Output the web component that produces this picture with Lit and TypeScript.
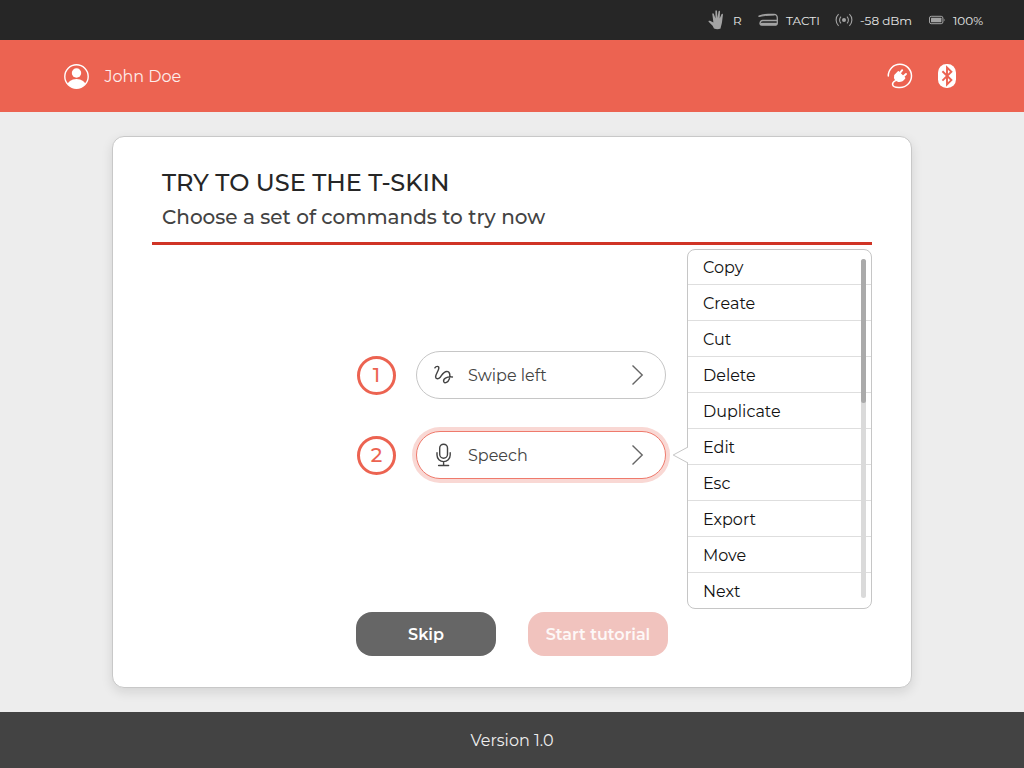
import { LitElement, html, css } from "lit";
import { customElement, state } from "lit/decorators.js";
import { classMap } from "lit/directives/class-map.js";

const COMMANDS = ["Copy", "Create", "Cut", "Delete", "Duplicate", "Edit", "Esc", "Export", "Move", "Next"];

const chevron = html`<svg width="14" height="22" viewBox="0 0 14 22" fill="none" stroke="#666" stroke-width="1.4"><path d="M1.5 1.5 11.2 11 1.5 20.5"/></svg>`;

const swipeIcon = html`<svg width="24" height="24" viewBox="0 0 24 24" fill="none" stroke="#434343" stroke-width="1.45" stroke-linecap="round" stroke-linejoin="round"><path d="M2.9 4.8C4 3 7 2.6 6.8 5.3C6.6 7.9 3.5 11.2 3.6 14C3.8 16.4 6.5 16.4 8.2 14.3C10.2 11.6 11.5 8.4 14.8 8.4C18 8.6 18.5 12.5 17.3 16C16 19.4 12.9 20.8 11.9 19C10.5 16.3 14.6 13.3 20.4 14"/></svg>`;

const micIcon = html`<svg width="24" height="24" viewBox="0 0 24 24" fill="none" stroke="#434343" stroke-width="1.4" stroke-linecap="round"><rect x="7.7" y="1.2" width="7.8" height="14" rx="3.9"/><path d="M5 9.8V12a6.6 6.6 0 0 0 13.2 0V9.8M11.6 18.6V22.4M6.6 22.5h10"/></svg>`;

@customElement("app-root")
export class AppRoot extends LitElement {
  static styles = css`
    :host { display: flex; flex-direction: column; width: 1024px; height: 768px; background: #ededed; font-family: Montserrat, Inter, "Open Sans", sans-serif; font-size: 16px; color: #434343; }
    * { box-sizing: border-box; }
    svg { display: block; flex: none; }
    .status { height: 40px; background: #262626; color: #e6e6e6; display: flex; align-items: center; justify-content: flex-end; padding-right: 40px; font-size: 12px; font-weight: 400; }
    .status span { white-space: nowrap; }
    .r { width: 8px; margin: 0 17px 0 9px; }
    .tacti { width: 34px; margin: 0 15px 0 7px; }
    .dbm { width: 52px; margin: 0 17px 0 7px; }
    .pct { width: 31px; margin-left: 8px; }
    .top { height: 72px; background: #ec6351; color: #fff; display: flex; align-items: center; padding: 0 67px 0 64px; }
    .name { flex: 1; margin-left: 15.5px; color: #fdeeec; }
    .bt { margin-left: 24px; }
    .main { flex: 1; display: flex; justify-content: center; align-items: center; }
    .card { position: relative; width: 800px; height: 552px; background: #fff; border: 1px solid #c8c8c8; border-radius: 12px; box-shadow: 0 4px 12px rgba(0,0,0,.11); padding: 29px 39px 0; display: flex; flex-direction: column; }
    .head { height: 79px; border-bottom: 3px solid #d03426; padding-left: 10px; white-space: nowrap; }
    .title { font-size: 24px; line-height: 34px; font-weight: 500; color: #262626; }
    .sub { font-size: 20px; line-height: 34px; font-weight: 500; }
    .steps { display: flex; flex-direction: column; gap: 32px; margin: 106px 0 0 205px; }
    .step { display: flex; align-items: center; height: 48px; }
    .num { width: 39px; height: 39px; border: 3px solid #ec6351; border-radius: 50%; color: #ec6351; font-size: 20px; font-weight: 500; display: flex; align-items: center; justify-content: center; margin-top: 1px; padding-bottom: 2px; }
    .pill { width: 250px; height: 48px; margin-left: 20px; border: 1px solid #c6c6c6; border-radius: 24px; background: #fff; display: flex; align-items: center; padding: 0 20px 0 15px; }
    .pill.on { border-color: #ef7a6c; box-shadow: 0 0 0 4px #f9d8d4; }
    .lbl { flex: 1; margin-left: 12px; }
    .actions { display: flex; gap: 32px; margin: 133px 0 0 204px; }
    .btn { width: 140px; height: 44px; border-radius: 16px; background: #666; color: #fff; font-weight: 600; display: flex; align-items: center; justify-content: center; }
    .btn.off { background: #f1c3be; color: #fdf8f7; }
    .menu { position: absolute; left: 574px; top: 112px; width: 185px; height: 360px; background: #fff; border: 1px solid #c6c6c6; border-radius: 8px; color: #111; }
    .item { height: 36px; line-height: 38px; padding-left: 15px; border-bottom: 1px solid #dedede; }
    .item:first-child { height: 35px; line-height: 35px; }
    .item:nth-child(10) { height: 35px; border: 0; }
    .track { position: absolute; right: 5px; top: 9px; width: 5px; height: 339px; border-radius: 3px; background: #dadada; }
    .thumb { height: 144px; border-radius: 3px; background: #aaa; }
    .tip { position: absolute; left: -16px; top: 196px; }
    .foot { height: 56px; background: #434343; color: #eee; display: flex; align-items: center; justify-content: center; }
  `;

  @state() private selected = 1;

  render() {
    return html`
      <div class="status">
        <svg width="16" height="22" viewBox="0 0 16 22" fill="#a3a3a3"><path d="M6 19.6 4.6 16.8.6 12.7C.2 12 1 11.3 2 11.8L5.4 13.6 4.3 5.1C4.2 4 5.4 3.8 5.8 4.8L7.5 9.4 7.4 2.3C7.4 .9 8.8.9 9 2.3L9.5 9 10.5 2.5C10.7 1.3 12.1 1.5 12 2.8L11.7 9.6 13.5 5.2C14 4.2 15.2 4.7 14.9 5.9L14 13.2C13.7 15.5 12.6 17.8 12.6 19.6Q9.5 21 6 19.6Z"/></svg>
        <span class="r">R</span>
        <svg width="21" height="14" viewBox="0 0 21 14" fill="none" stroke="#a3a3a3"><path d="M.6 3.3Q5 1.4 10 1.4H16Q19.3 1.6 19.3 5V10.5Q19.3 12 17.8 12H4Q1.8 12 2 10.2 2.3 7.6 4.8 7.5H19" stroke-width="1.3"/><path d="M.6 3.4Q7 2.2 16.5 2" stroke-width="1"/><path d="M2.3 11H19" stroke-width="2.4"/></svg>
        <span class="tacti">TACTI</span>
        <svg width="18" height="14" viewBox="0 0 18 14" fill="none" stroke="#a3a3a3" stroke-width="1.1"><circle cx="9" cy="7" r="2" fill="#a3a3a3" stroke="none"/><path d="M6 3.6a4.8 4.8 0 0 0 0 6.8M12 3.6a4.8 4.8 0 0 1 0 6.8M3.6 1.2a8 8 0 0 0 0 11.6M14.4 1.2a8 8 0 0 1 0 11.6"/></svg>
        <span class="dbm">-58 dBm</span>
        <svg width="16" height="10" viewBox="0 0 16 10"><rect x=".5" y="1.3" width="13.4" height="7.4" rx="1.7" fill="none" stroke="#a3a3a3"/><rect x="2" y="2.8" width="10.4" height="4.4" rx=".5" fill="#a3a3a3"/><path d="M14.8 3.5q1.6 1.5 0 3z" fill="#a3a3a3"/></svg>
        <span class="pct">100%</span>
      </div>
      <div class="top">
        <svg width="25" height="25" viewBox="0 0 25 25"><defs><clipPath id="disc"><circle cx="12.5" cy="12.5" r="11.5"/></clipPath></defs><circle cx="12.5" cy="12.5" r="11.7" fill="none" stroke="#fff" stroke-width="1.4"/><circle cx="12.5" cy="9" r="4.7" fill="#fff"/><ellipse cx="12.5" cy="21.5" rx="9.3" ry="6.5" fill="#fff" clip-path="url(#disc)"/></svg>
        <span class="name">John Doe</span>
        <svg width="26" height="26" viewBox="0 0 26 26" fill="none" stroke="#fff" stroke-width="1.5" stroke-linecap="round"><path d="M1.3 13A11.6 11.6 0 1 1 13 24.5C9.5 24.7 6 24 5.6 21.7C5.2 19.8 6.8 18.5 8.5 17.6"/><path d="M8 12.2 11.4 8.8 17.6 15Q15.4 18.4 11.6 18.2 6.8 17 8 12.2Z" fill="#fff" stroke-linejoin="round"/><path d="M13 9.9 15.2 7.2M16.6 13.3 19 11" stroke-width="1.9"/></svg>
        <svg class="bt" width="20" height="26" viewBox="0 0 20 26"><rect x="1" y="1" width="18" height="24" rx="8.5" fill="#fff"/><path d="M5.4 8.2 14.4 17.1 10 21.4V4.5L14.4 8.8 5.4 17.6" fill="none" stroke="#ec6351" stroke-width="1.9"/></svg>
      </div>
      <div class="main"><div class="card">
        <div class="head"><div class="title">TRY TO USE THE T-SKIN</div><div class="sub">Choose a set of commands to try now</div></div>
        <div class="steps">
          ${["Swipe left", "Speech"].map((label, i) => html`<div class="step"><div class="num">${i + 1}</div>
            <div class=${classMap({ pill: true, on: this.selected === i })} @click=${() => (this.selected = i)}>${i ? micIcon : swipeIcon}<span class="lbl">${label}</span>${chevron}</div></div>`)}
        </div>
        <div class="actions"><div class="btn">Skip</div><div class="btn off">Start tutorial</div></div>
        <div class="menu">
          ${COMMANDS.map(c => html`<div class="item">${c}</div>`)}
          <div class="track"><div class="thumb"></div></div>
          <svg class="tip" width="17" height="20" viewBox="0 0 17 20"><path d="M16 1 1.2 9 16 17" fill="#fff" stroke="#c6c6c6"/></svg>
        </div>
      </div></div>
      <div class="foot">Version 1.0</div>`;
  }
}
